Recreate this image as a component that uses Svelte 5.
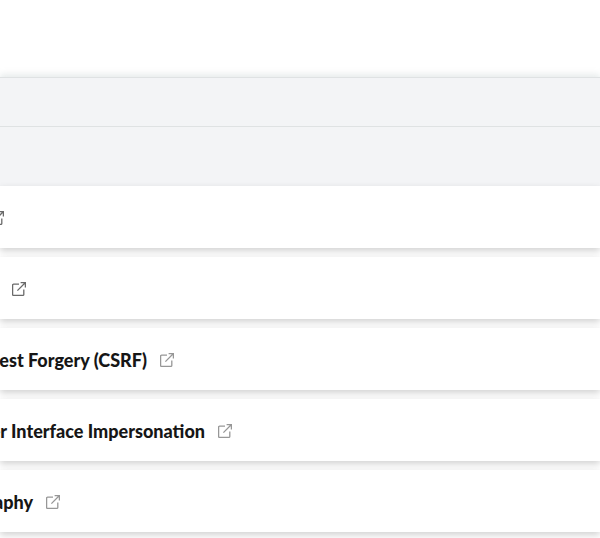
<script>
  const rows = [
    { name: 'Cross-Site Scripting', end: -23, icon: '#6a6a6a' },
    { name: 'Server-Side Request Forgery', end: -1, icon: '#6a6a6a' },
    { name: 'Cross-Site Request Forgery (CSRF)', end: 147, icon: '#979797' },
    { name: 'UI Redress / User Interface Impersonation', end: 205, icon: '#979797' },
    { name: 'Cryptography', end: 33, icon: '#979797' }
  ];
</script>

<div class="page">
  <div class="head">
    <div class="band first"></div>
    <div class="band second"></div>
  </div>
  <div class="list">
    {#each rows as row}
      <div class="row">
        <div class="name" style="margin-left: {row.end}px"><span>{row.name}</span></div>
        <svg class="link" viewBox="0 0 14 14" width="14" height="14" fill="none" stroke={row.icon} stroke-width="1.3">
          <path d="M7 2.2H1.6a1 1 0 0 0-1 1v9.2a1 1 0 0 0 1 1h9.2a1 1 0 0 0 1-1V7.4" />
          <path d="M5.4 8.6 13.2.8M8.6.6h4.8v4.8" />
        </svg>
      </div>
    {/each}
  </div>
</div>

<style>
  :global(body) {
    background: #fff;
  }
  .page {
    width: 600px;
    height: 538px;
    overflow: hidden;
    padding-top: 77px;
    box-sizing: border-box;
    font-family: Lato, "Open Sans", sans-serif;
  }
  .head {
    box-shadow: 0 -3px 6px rgba(150, 170, 170, 0.22);
  }
  .band {
    background: #f3f4f6;
    border-top: 1px solid #dfe2e3;
  }
  .first {
    height: 48px;
  }
  .second {
    height: 59px;
  }
  .list {
    display: flex;
    flex-direction: column;
    gap: 9px;
  }
  .row {
    position: relative;
    height: 62px;
    padding-top: 2px;
    box-sizing: border-box;
    display: flex;
    align-items: center;
    gap: 13px;
    background: #fff;
    box-shadow: 0 3px 7px rgba(0, 0, 0, 0.18);
  }
  .name {
    width: 0;
    display: flex;
    justify-content: flex-end;
    white-space: nowrap;
    font-size: 18px;
    font-weight: 900;
    color: #161616;
  }
  .name span {
    flex: none;
  }
  .link {
    flex: none;
  }
</style>
